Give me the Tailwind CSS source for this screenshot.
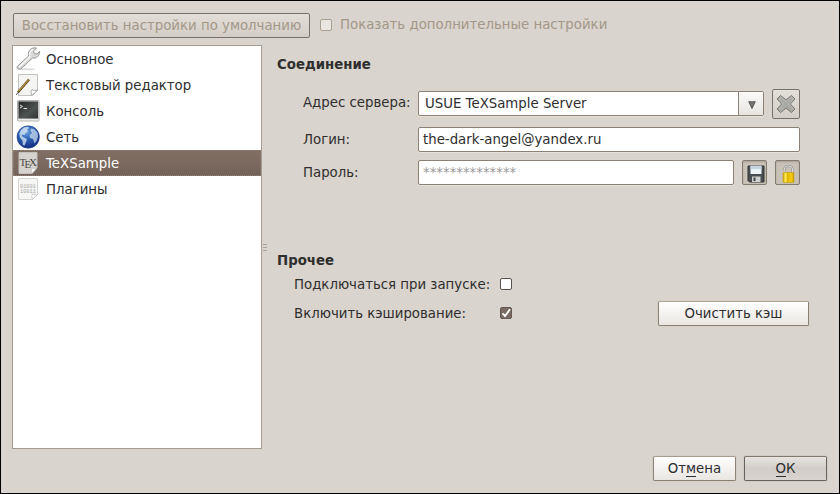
<!DOCTYPE html>
<html lang="ru">
<head>
<meta charset="utf-8">
<title>Настройки</title>
<script src="https://cdn.jsdelivr.net/npm/@tailwindcss/browser@4"></script>
</head>
<body class="w-[840px] h-[494px] overflow-hidden">
<div class="w-[840px] h-[494px] border border-black bg-[#d9d4cd] text-[#2e2e2e] text-[13.32px] leading-4 font-['DejaVu_Sans',sans-serif] flex flex-col whitespace-nowrap">

  <!-- Top bar -->
  <header class="flex items-center h-[25px] mt-3 ml-3 shrink-0">
    <button class="w-[297px] h-[25px] rounded-[2px] border border-[#77736c] bg-gradient-to-b from-[#e2ded8] to-[#d3cdc5] text-[#a39887] flex items-center justify-center">Восстановить настройки по умолчанию</button>
    <span class="ml-[10px] mb-px w-3 h-3 rounded-[2px] border border-[#aba08f] bg-[#e9e6e1]"></span>
    <span class="ml-2 pb-[2px] text-[#a39887]">Показать дополнительные настройки</span>
  </header>

  <main class="flex mt-[7px] ml-[11px] h-[404px] shrink-0">
    <!-- Sections -->
    <ul class="w-[250px] border border-[#a49a8d] bg-white shrink-0">
      <li class="flex items-center h-[26px] pl-[3px]">
        <svg class="w-6 h-6 mr-[6px]" viewBox="0 0 24 24"><ellipse cx="10" cy="22.300" rx="9" ry="1" fill="#ddd"/><path d="M1.200 19.500 12.600 9C11.600 5.400 13.600 1.200 18.300.8L20.500 1 17.500 4 18.500 6.700 21.200 7 23.500 4.300C23.700 8.700 20.500 11.700 16.500 11L5 21.800C2.800 22.700.3 21.300 1.200 19.500Z" fill="#d9d9d7" stroke="#8c8c8a" stroke-width=".9"/><path d="M3 20 14 9.700C13.200 6 14.600 3.300 17.300 2.400" fill="none" stroke="#fafafa" stroke-width="1.200"/></svg>
        <span class="pt-[2px]">Основное</span>
      </li>
      <li class="flex items-center h-[26px] pl-[3px]">
        <svg class="w-6 h-6 mr-[6px]" viewBox="0 0 24 24"><path d="M2.500 1.500H21.500V17L16.500 22.500H2.500Z" fill="#f4f4f2" stroke="#c2c2c0"/><path d="M21.500 17 16 22.500Q13.500 18.500 16 16.500 18 18.500 21.500 17Z" fill="#fff" stroke="#999" stroke-width=".8"/><path d="M0 22 3 18.500" stroke="#555" stroke-width="1"/><path d="M2 19.300 13 6.600" stroke="#493613" stroke-width="2.300"/><path d="M2.500 18.300 12.700 6.700" stroke="#c29a42" stroke-width="1.200"/></svg>
        <span class="pt-[2px]">Текстовый редактор</span>
      </li>
      <li class="flex items-center h-[26px] pl-[3px]">
        <svg class="w-6 h-6 mr-[6px]" viewBox="0 0 24 24"><defs><linearGradient id="con" x2="1" y2="1"><stop stop-color="#232726"/><stop offset=".6" stop-color="#4e5251"/><stop offset="1" stop-color="#303433"/></linearGradient></defs><rect x="1.500" y="1.500" width="21.500" height="20.500" rx=".8" fill="#d2d2d0" stroke="#b0b0ae"/><rect x="2.500" y="2.500" width="19.500" height="17" fill="url(#con)"/><path d="M4 6 6.500 7.500 4 9M7.500 9.500H11" fill="none" stroke="#eee" stroke-width="1"/><path d="M2 20.800H22.500" stroke="#fff" stroke-width=".8"/></svg>
        <span class="pt-[2px]">Консоль</span>
      </li>
      <li class="flex items-center h-[26px] pl-[3px]">
        <svg class="w-6 h-6 mr-[6px]" viewBox="0 0 24 24"><defs><radialGradient id="glb" cx=".4" cy=".25" r=".78"><stop stop-color="#7aaee6"/><stop offset=".4" stop-color="#3167b8"/><stop offset="1" stop-color="#122a80"/></radialGradient></defs><circle cx="12.200" cy="12" r="11.200" fill="url(#glb)" stroke="#1e3f88" stroke-width=".6"/><path d="M5 5 8 2.500 12 1.700 13 3 11 4.500 12 6.500 9.500 8 8.500 10 6.500 9.500 5.500 10.800 8 12.500 11 14 10 17 8.500 20.500 6.800 20 6.500 15.500 4 12.500 3.300 8.500Z" fill="#dceaf7" opacity=".75"/><path d="M15 3.500 18 4 21.500 7.500 22 11.500 20.500 16 18.500 18.500 17 14 14 13 13.500 10 16 8 14.500 6Z" fill="#d3e5f7" opacity=".7"/></svg>
        <span class="pt-[2px]">Сеть</span>
      </li>
      <li class="flex items-center h-[26px] pl-[3px] text-white bg-gradient-to-b from-[#826f64] to-[#74635a] outline outline-1 outline-dotted -outline-offset-1 outline-[#8f7e74]">
        <svg class="w-6 h-6 mr-[6px]" viewBox="0 0 24 24"><path d="M3 1.500H21V17L16 22.500H3Z" fill="#d6d3ce" stroke="#c3c0bb"/><path d="M21 17 16 22.500Q14.500 18.500 16 17 18 18 21 17Z" fill="#f5f5f3" stroke="#b8b5b0" stroke-width=".6"/><g fill="#494744" font-family="Liberation Serif,serif" font-size="11"><text x="3.500" y="15">T</text><text x="8.500" y="17" font-size="10.500">E</text><text x="13" y="15">X</text></g></svg>
        <span class="pt-[2px]">TeXSample</span>
      </li>
      <li class="flex items-center h-[26px] pl-[3px]">
        <svg class="w-6 h-6 mr-[6px]" viewBox="0 0 24 24"><path d="M2.500 1.500H21.500V17.500L16.500 22.500H2.500Z" fill="#f6f6f5" stroke="#d4d4d2"/><path d="M21.500 17.500 16.500 22.500Q15 18.500 16.500 17 18.500 18.500 21.500 17.500Z" fill="#fff" stroke="#bbb" stroke-width=".7"/><g fill="#a7a7a5" font-family="Liberation Mono,monospace" font-size="5.300"><text x="4" y="11">01001</text><text x="4" y="16">10011</text></g></svg>
        <span class="pt-[2px]">Плагины</span>
      </li>
    </ul>

    <!-- Splitter grip -->
    <div class="w-[15px] pl-px flex flex-col gap-[2px] pt-[198px] shrink-0">
      <i class="block w-1 h-px bg-[#aaa396] mt-px"></i><i class="block w-1 h-px bg-[#aaa396]"></i><i class="block w-1 h-px bg-[#aaa396]"></i>
    </div>

    <section class="w-[550px] flex flex-col">
      <h2 class="font-bold mt-3 h-4">Соединение</h2>
      <div class="mt-4 ml-[26px] w-[497px] h-[30px] flex items-center">
        <span class="w-[115px] pb-[2px]">Адрес сервера:</span>
        <div class="w-[346px] h-[25px] -mt-px flex rounded-[2px] border border-[#8b8175] bg-white shadow-[0_1px_0_#e6e2dc]">
          <span class="flex-1 pl-[6px] leading-[23px]">USUE TeXSample Server</span>
          <span class="w-[25px] border-l border-[#8b8175] bg-gradient-to-b from-[#fbfaf9] to-[#e8e5e1] flex items-center justify-center">
            <svg class="w-2 h-2 mt-[3px] ml-[2px]" viewBox="0 0 8 8"><path d="M.7.7H7.300L4 7.500Z" fill="#777" stroke="#444" stroke-width=".8"/></svg>
          </span>
        </div>
        <button class="ml-2 w-7 h-[30px] rounded-[2px] border border-[#78736c] bg-gradient-to-b from-[#e3dfd9] to-[#d4cec6] flex items-center justify-center">
          <svg class="w-5 h-5" viewBox="0 0 20 20"><path d="M4.500 1.500 10 5.800 15.500 1.500 19 5 14.300 10 19 15 15.500 18.500 10 14.200 4.500 18.500 1 15 5.700 10 1 5Z" fill="#a8a8a5" stroke="#787875" stroke-linejoin="round"/><path d="M4.500 3 10 7.500 15.500 3 17.500 5 13 10 17.500 15M4.500 17 8 14M2.800 5 7.200 10 2.800 15" fill="none" stroke="#c2c2bf" stroke-width=".8"/></svg>
        </button>
      </div>
      <div class="mt-2 ml-[26px] w-[497px] h-[25px] flex items-center">
        <span class="w-[115px]">Логин:</span>
        <div class="w-[382px] h-[25px] pl-1 leading-[24px] rounded-[2px] border border-[#8b8175] bg-white shadow-[0_1px_0_#e6e2dc]">the-dark-angel@yandex.ru</div>
      </div>
      <div class="mt-2 ml-[26px] w-[497px] h-[25px] flex items-center">
        <span class="w-[115px]">Пароль:</span>
        <div class="w-[316px] h-[25px] pl-1 leading-[24px] rounded-[2px] border border-[#8b8175] bg-white text-[#9b9b9b] shadow-[0_1px_0_#e6e2dc]">**************</div>
        <button class="ml-2 w-[25px] h-[25px] rounded-[2px] border border-[#837b70] bg-[#c9c2b8] shadow-[inset_0_1px_2px_#aaa195] flex items-center justify-center">
          <svg class="w-[18px] h-[18px] mt-[3px] ml-[2px]" viewBox="0 0 18 18"><path d="M1 1H17V17H2.500L1 15.500Z" fill="#4a4e50" stroke="#303335"/><path d="M3.500.8H14.500V9H3.500Z" fill="#edf3f7"/><path d="M3.500 1H14.500V4H3.500Z" fill="#c3d4e1"/><path d="M5 11.500H13.500V17H5Z" fill="#d0d0ce"/><path d="M6.500 12.500H8.500V16H6.500Z" fill="#3c4042"/></svg>
        </button>
        <button class="ml-2 w-[25px] h-[25px] rounded-[2px] border border-[#837b70] bg-[#c9c2b8] shadow-[inset_0_1px_2px_#aaa195] flex items-center justify-center">
          <svg class="w-[18px] h-[18px] mt-[3px]" viewBox="0 0 18 18"><defs><linearGradient id="lk"><stop stop-color="#d6a900"/><stop offset=".25" stop-color="#ffed62"/><stop offset=".4" stop-color="#e3b600"/><stop offset=".75" stop-color="#f4ce16"/><stop offset="1" stop-color="#c79b00"/></linearGradient></defs><path d="M5.500 5.500V4Q5.700 1 9.500 1T13.500 4.500V8.500" fill="none" stroke="#8d8f8c" stroke-width="2.200"/><path d="M5.500 5.500V4Q5.700 1 9.500 1T13.500 4.500V8.500" fill="none" stroke="#dcdddb" stroke-width="1.100"/><rect x="4" y="7.500" width="11" height="10" rx=".8" fill="url(#lk)" stroke="#c29a08" stroke-width=".6"/></svg>
        </button>
      </div>

      <h2 class="font-bold mt-[68px] h-4">Прочее</h2>
      <div class="mt-[8px] ml-[17px] h-4 flex items-center">
        <span class="w-[206px]">Подключаться при запуске:</span>
        <span class="mb-[2px] w-3 h-3 rounded-[2px] border border-[#58534e] bg-white"></span>
      </div>
      <div class="mt-[8px] ml-[17px] h-[25px] flex items-center">
        <span class="w-[206px]">Включить кэширование:</span>
        <span class="mb-px w-3 h-3 rounded-[2px] border border-[#655850] bg-[#7b6a61]"><svg class="w-[10px] h-[10px] block" viewBox="0 0 10 10"><path d="M1.500 5.300 4 8 9 1.300" fill="none" stroke="#fff" stroke-width="1.900"/></svg></span>
        <button class="ml-[146px] w-[151px] h-[25px] rounded-[2px] border border-[#8b8175] border-t-[#b1a798] bg-gradient-to-b from-white to-[#e9e6e2] shadow-[0_0_1px_#a69e92] flex items-center justify-center">Очистить кэш</button>
      </div>
    </section>
  </main>

  <footer class="mt-[7px] mr-3 h-[25px] flex justify-end gap-2 shrink-0">
    <button class="w-[83px] h-[25px] rounded-[2px] border border-[#8b8175] border-t-[#a69c8e] bg-gradient-to-b from-white to-[#e9e6e2] shadow-[0_0_1px_#a69e92] leading-[23px]">От<span class="border-b border-[#2e2e2e]">м</span>ена</button>
    <button class="w-[83px] h-[25px] rounded-[2px] border border-[#67625b] border-t-[#81796e] bg-gradient-to-b from-[#e7e4e1] via-[#d2cdc8] to-[#d9d4cf] shadow-[0_0_1px_#8f887d] leading-[23px]"><span class="border-b border-[#2e2e2e]">О</span>К</button>
  </footer>
</div>
</body>
</html>
